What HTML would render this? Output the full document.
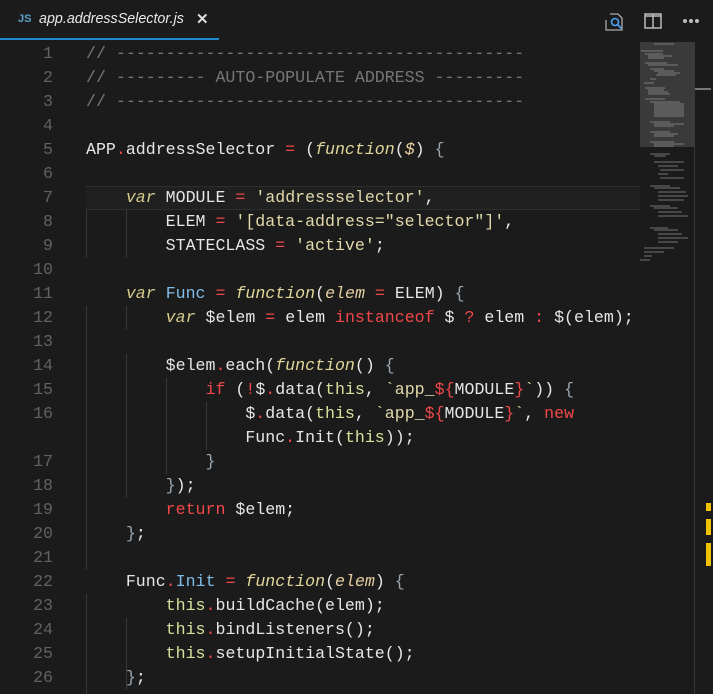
<!DOCTYPE html>
<html><head><style>
body{margin:0;width:713px;height:694px;background:#1b1b1b;overflow:hidden;position:relative;font-family:"Liberation Mono",monospace;}
.tabbar{position:absolute;left:0;top:0;width:713px;height:40px;background:#1b1b1b;}
.tab{position:absolute;left:0;top:0;width:219px;height:38px;border-bottom:2px solid #1f8ad2;}
.js{position:absolute;left:18px;top:13px;font:bold 11px "Liberation Sans",sans-serif;color:#5aa0c8;}
.tname{position:absolute;left:39px;top:11px;font:italic 14.3px "Liberation Sans",sans-serif;color:#e8e8e8;}
.x{position:absolute;left:196px;top:10px;font:bold 15px "Liberation Sans",sans-serif;color:#ddd;}
.code{position:absolute;left:0;top:42px;}
.ln{position:absolute;left:0;width:53px;text-align:right;color:#626262;font-size:16.6px;line-height:24px;}
.l{position:absolute;left:86px;white-space:pre;color:#e6e6e6;font-size:16.6px;line-height:24px;}
.c{color:#777}.o{color:#f0484a}.s{color:#e2d8aa}.k{color:#d6c98a;font-style:italic}.f{color:#e3d69a;font-style:italic}
.b{color:#7fbde8}.t{color:#d9e09a}.r{color:#f0484a}.p{color:#e6cfa0;font-style:italic}.g{color:#9aa7b0}
.guide{position:absolute;width:1px;background:#3a3a3a;}
</style></head><body>
<div class="tabbar"><div class="tab"><span class="js">JS</span><span class="tname">app.addressSelector.js</span><span class="x">✕</span></div>
<svg style="position:absolute;left:604px;top:12px" width="22" height="20" viewBox="0 0 22 20"><path d="M6 2h8l4 4v12H2V8" fill="none" stroke="#aaa" stroke-width="1.3"/><circle cx="11" cy="10" r="3.5" fill="none" stroke="#4aa3f0" stroke-width="1.6"/><path d="M13.5 12.5l4 4" stroke="#4aa3f0" stroke-width="1.8"/></svg>
<svg style="position:absolute;left:644px;top:13px" width="18" height="16"><rect x="1" y="1" width="16" height="14" fill="none" stroke="#bbb" stroke-width="1.5"/><path d="M9 1v14M1 3h16" stroke="#bbb" stroke-width="1.5"/></svg>
<div style="position:absolute;left:683px;top:19px;width:16px;height:4px;"><span style="position:absolute;left:0;width:4px;height:4px;border-radius:2px;background:#bbb"></span><span style="position:absolute;left:6px;width:4px;height:4px;border-radius:2px;background:#bbb"></span><span style="position:absolute;left:12px;width:4px;height:4px;border-radius:2px;background:#bbb"></span></div>
</div>
<div style="position:absolute;left:86px;top:186px;width:554px;height:22px;border-top:1px solid #2e2e2e;border-bottom:1px solid #2e2e2e;background:#202020"></div>
<div class="guide" style="left:86px;top:210px;height:48px"></div>
<div class="guide" style="left:126px;top:210px;height:48px"></div>
<div class="guide" style="left:86px;top:306px;height:264px"></div>
<div class="guide" style="left:126px;top:306px;height:24px"></div>
<div class="guide" style="left:126px;top:354px;height:144px"></div>
<div class="guide" style="left:166px;top:378px;height:96px"></div>
<div class="guide" style="left:206px;top:402px;height:48px"></div>
<div class="guide" style="left:86px;top:594px;height:100px"></div>
<div class="guide" style="left:126px;top:618px;height:72px"></div>
<div class="code">
<div class="ln" style="top:0">1</div><div class="l" style="top:0"><span class="c">// -----------------------------------------</span></div>
<div class="ln" style="top:24px">2</div><div class="l" style="top:24px"><span class="c">// --------- AUTO-POPULATE ADDRESS ---------</span></div>
<div class="ln" style="top:48px">3</div><div class="l" style="top:48px"><span class="c">// -----------------------------------------</span></div>
<div class="ln" style="top:72px">4</div>
<div class="ln" style="top:96px">5</div><div class="l" style="top:96px">APP<span class="o">.</span>addressSelector <span class="o">=</span> (<span class="f">function</span>(<span class="p">$</span>) <span class="g">{</span></div>
<div class="ln" style="top:120px">6</div>
<div class="ln" style="top:144px">7</div><div class="l" style="top:144px">    <span class="k">var</span> MODULE <span class="o">=</span> <span class="s">'addressselector'</span>,</div>
<div class="ln" style="top:168px">8</div><div class="l" style="top:168px">        ELEM <span class="o">=</span> <span class="s">'[data-address="selector"]'</span>,</div>
<div class="ln" style="top:192px">9</div><div class="l" style="top:192px">        STATECLASS <span class="o">=</span> <span class="s">'active'</span>;</div>
<div class="ln" style="top:216px">10</div>
<div class="ln" style="top:240px">11</div><div class="l" style="top:240px">    <span class="k">var</span> <span class="b">Func</span> <span class="o">=</span> <span class="f">function</span>(<span class="p">elem</span> <span class="o">=</span> ELEM) <span class="g">{</span></div>
<div class="ln" style="top:264px">12</div><div class="l" style="top:264px">        <span class="k">var</span> $elem <span class="o">=</span> elem <span class="r">instanceof</span> $ <span class="o">?</span> elem <span class="o">:</span> $(elem);</div>
<div class="ln" style="top:288px">13</div>
<div class="ln" style="top:312px">14</div><div class="l" style="top:312px">        $elem<span class="o">.</span>each(<span class="f">function</span>() <span class="g">{</span></div>
<div class="ln" style="top:336px">15</div><div class="l" style="top:336px">            <span class="r">if</span> (<span class="o">!</span>$<span class="o">.</span>data(<span class="t">this</span>, <span class="s">`app_</span><span class="o">${</span>MODULE<span class="o">}</span><span class="s">`</span>)) <span class="g">{</span></div>
<div class="ln" style="top:360px">16</div><div class="l" style="top:360px">                $<span class="o">.</span>data(<span class="t">this</span>, <span class="s">`app_</span><span class="o">${</span>MODULE<span class="o">}</span><span class="s">`</span>, <span class="r">new</span></div>
<div class="l" style="top:384px">                Func<span class="o">.</span>Init(<span class="t">this</span>));</div>
<div class="ln" style="top:408px">17</div><div class="l" style="top:408px">            <span class="g">}</span></div>
<div class="ln" style="top:432px">18</div><div class="l" style="top:432px">        <span class="g">}</span>);</div>
<div class="ln" style="top:456px">19</div><div class="l" style="top:456px">        <span class="r">return</span> $elem;</div>
<div class="ln" style="top:480px">20</div><div class="l" style="top:480px">    <span class="g">}</span>;</div>
<div class="ln" style="top:504px">21</div>
<div class="ln" style="top:528px">22</div><div class="l" style="top:528px">    Func<span class="o">.</span><span class="b">Init</span> <span class="o">=</span> <span class="f">function</span>(<span class="p">elem</span>) <span class="g">{</span></div>
<div class="ln" style="top:552px">23</div><div class="l" style="top:552px">        <span class="t">this</span><span class="o">.</span>buildCache(elem);</div>
<div class="ln" style="top:576px">24</div><div class="l" style="top:576px">        <span class="t">this</span><span class="o">.</span>bindListeners();</div>
<div class="ln" style="top:600px">25</div><div class="l" style="top:600px">        <span class="t">this</span><span class="o">.</span>setupInitialState();</div>
<div class="ln" style="top:624px">26</div><div class="l" style="top:624px">    <span class="g">}</span>;</div>
</div>
<div style="position:absolute;left:640px;top:42px;width:54px;height:105px;background:#3a3a3a"></div>
<svg style="position:absolute;left:640px;top:42px" width="54" height="225">
<g stroke="#999" stroke-width="1" opacity="0.7">
<path d="M14 2h20M1 9h22M5 12h18M8 14h24M8 16h16M5 21h22M8 23h30M10 27h14M14 29h20M18 31h22M16 33h20M10 37h6M4 41h10M5 46h20M8 48h16M8 50h20M8 52h22M5 57h20M10 60h30M14 62h30M14 64h30M14 66h30M14 68h30M14 70h30M14 72h30M14 74h30M10 80h20M14 82h30M14 84h20M10 90h20M14 92h24M14 94h20M10 100h24M14 102h30M14 104h20M10 112h20M14 114h12M14 120h30M18 124h20M20 128h24M18 132h10M20 136h24M10 144h20M14 146h26M18 150h28M18 154h30M18 158h26M10 164h20M14 166h24M18 170h24M18 174h30M10 186h18M14 188h24M18 192h24M18 196h30M18 200h20M4 206h30M4 210h20M4 214h8M0 218h10"/>
</g></svg>
<div style="position:absolute;left:694px;top:42px;width:1px;height:652px;background:#3a3a3a"></div>
<div style="position:absolute;left:695px;top:88px;width:16px;height:2px;background:#777"></div>
<div style="position:absolute;left:706px;top:503px;width:5px;height:8px;background:#f2c200"></div>
<div style="position:absolute;left:706px;top:519px;width:5px;height:16px;background:#f2c200"></div>
<div style="position:absolute;left:706px;top:543px;width:5px;height:23px;background:#f2c200"></div>
</body></html>
